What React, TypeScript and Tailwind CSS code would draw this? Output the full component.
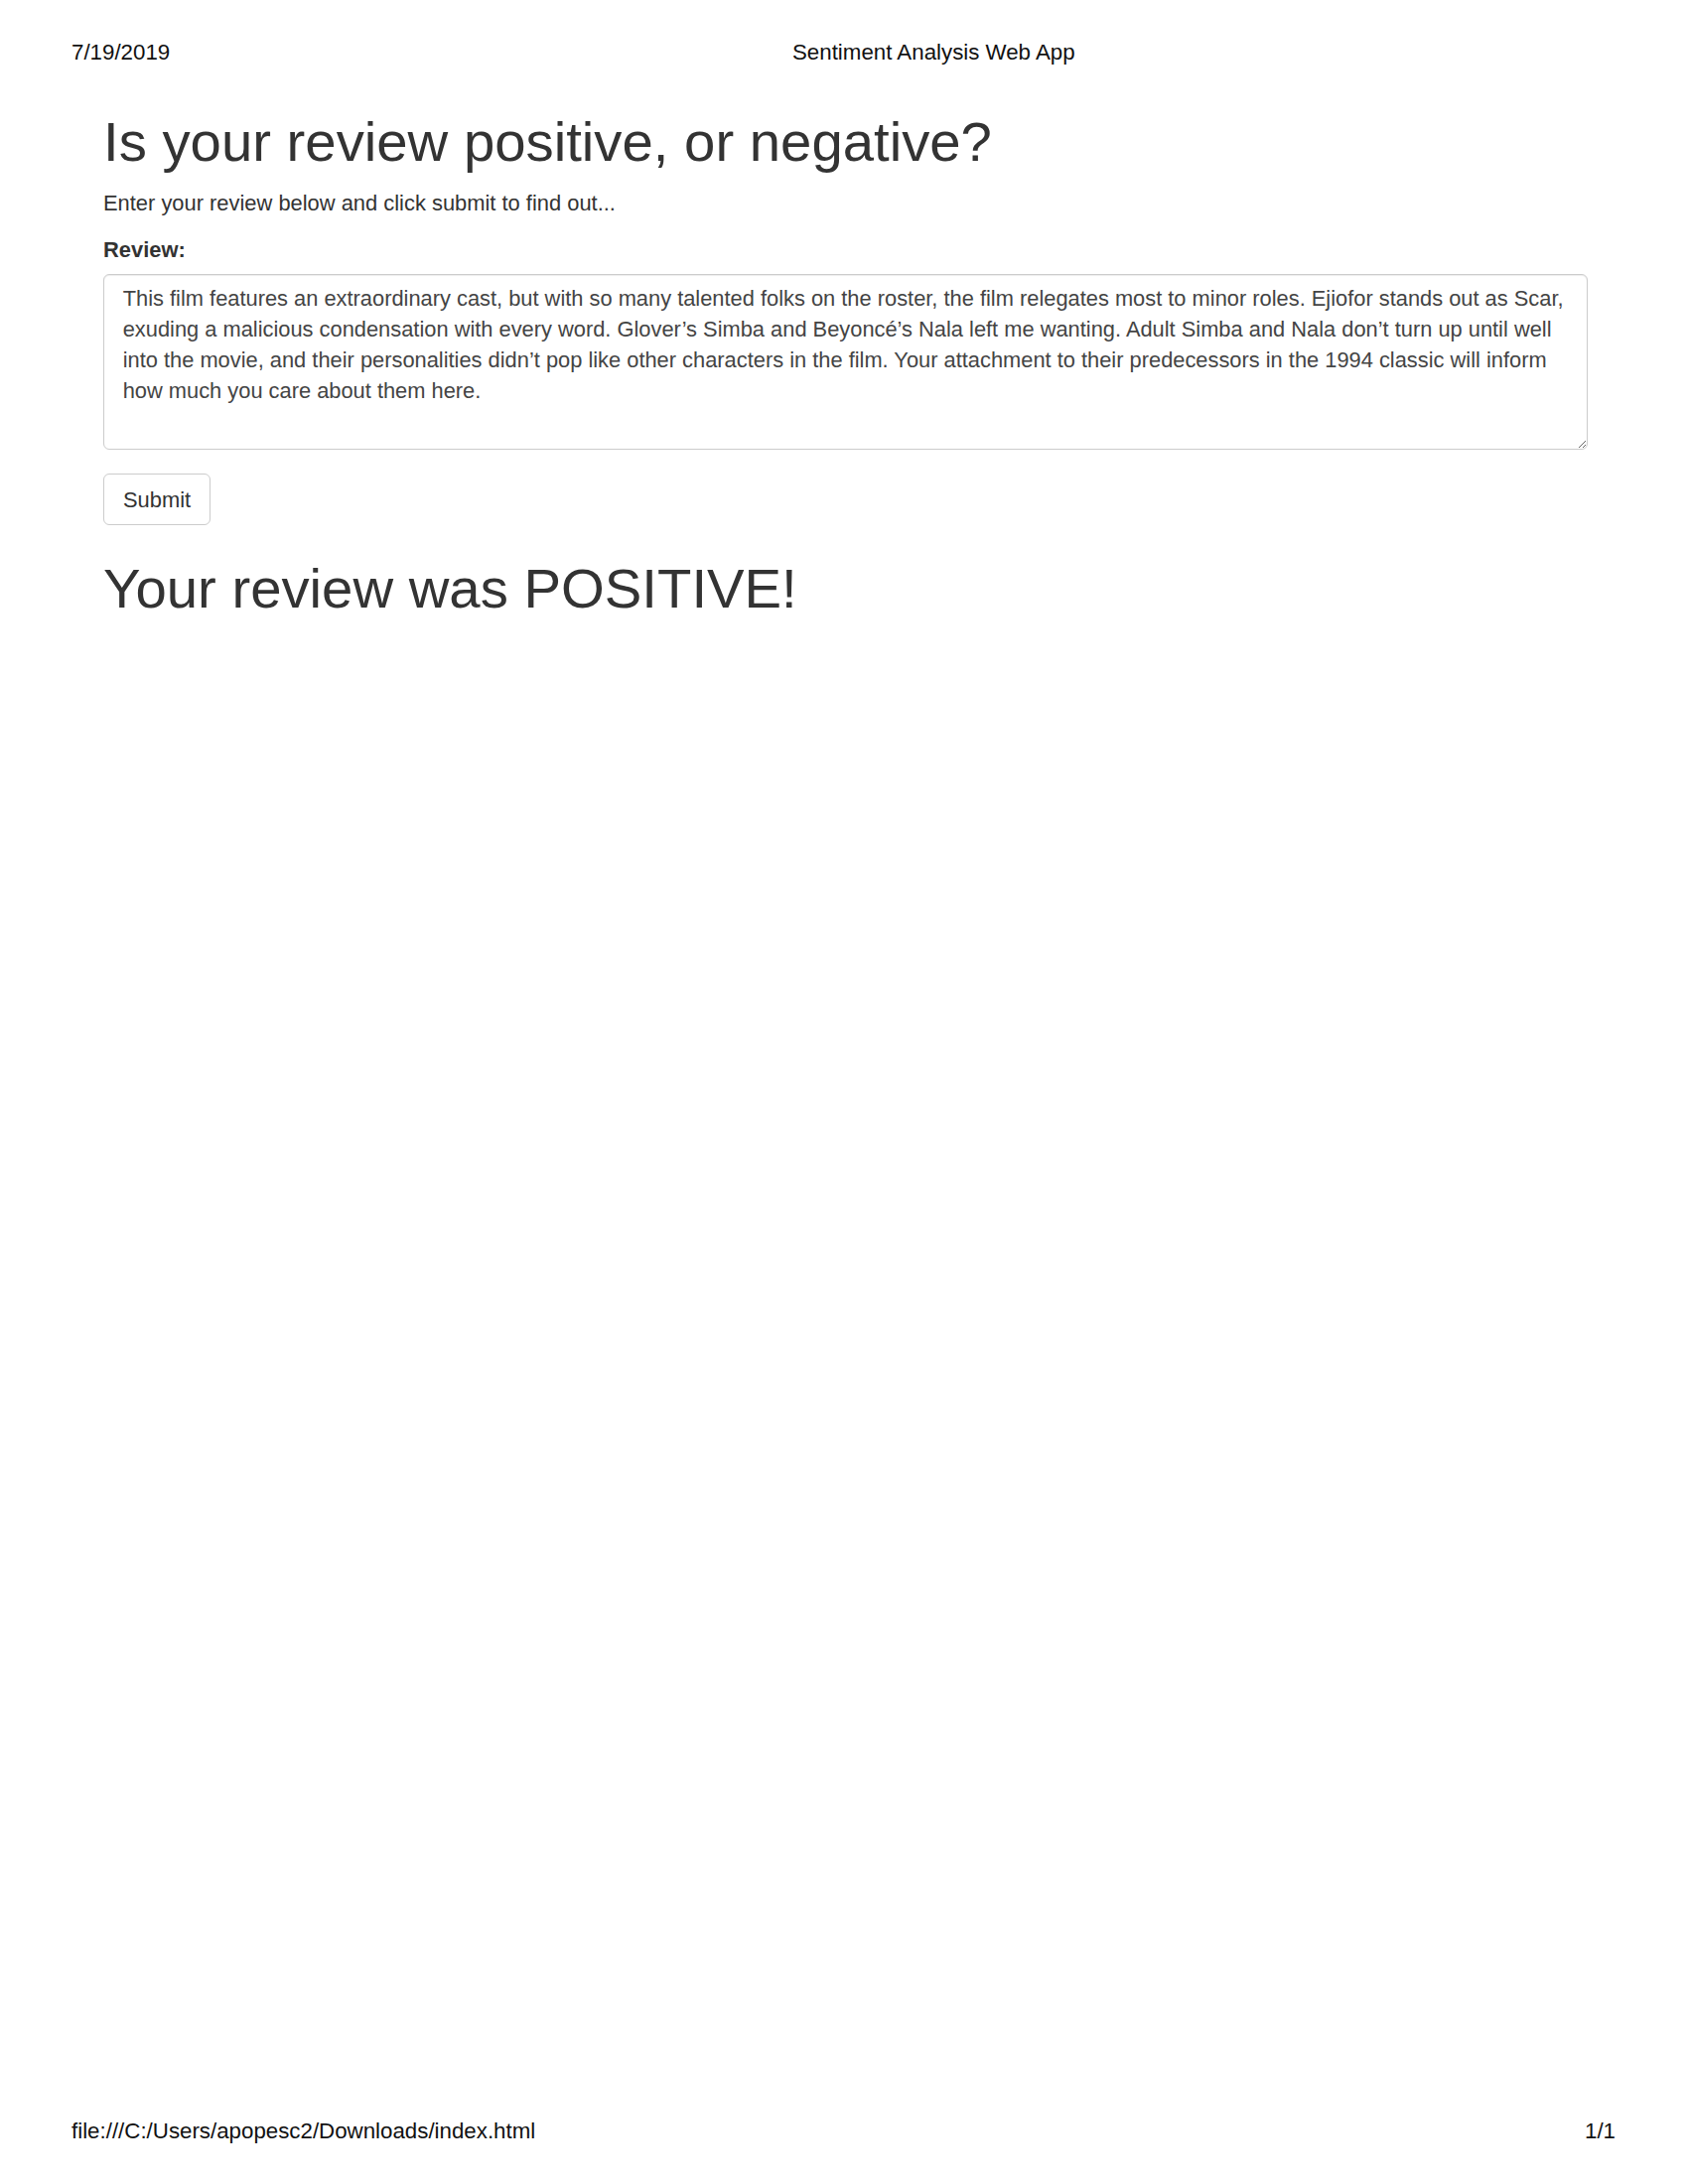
const review =
  "This film features an extraordinary cast, but with so many talented folks on the roster, the film relegates most to minor roles. Ejiofor stands out as Scar, exuding a malicious condensation with every word. Glover’s Simba and Beyoncé’s Nala left me wanting. Adult Simba and Nala don’t turn up until well into the movie, and their personalities didn’t pop like other characters in the film. Your attachment to their predecessors in the 1994 classic will inform how much you care about them here.";

export default function App() {
  return (
    <div className="flex h-[2200px] flex-col bg-white font-['Liberation_Sans',Arial,sans-serif] text-[#333]">
      {/* print header */}
      <header className="flex pl-[72px] pt-[40px] text-[22.3px] leading-[26px] text-[#111]">
        <span className="w-[726px]">7/19/2019</span>
        <span>Sentiment Analysis Web App</span>
      </header>

      <main className="flex-1 pl-[104px]">
        <h1 className="mt-[46px] text-[56.3px] font-normal leading-[62px]">Is your review positive, or negative?</h1>
        <p className="mt-[15px] text-[21.9px] leading-[31px]">Enter your review below and click submit to find out...</p>
        <form className="mt-[16px]" onSubmit={(e) => e.preventDefault()}>
          <label htmlFor="review" className="block text-[21.9px] font-bold leading-[31px]">
            Review:
          </label>
          <textarea
            id="review"
            readOnly
            defaultValue={review}
            className="mt-[9px] block h-[177px] w-[1495px] rounded-[6px] border border-[#ccc] bg-white pb-[9px] pl-[18.7px] pr-[16.5px] pt-[8px] text-[21.85px] leading-[31.1px] text-[#444] shadow-[inset_0_1px_1px_rgba(0,0,0,0.075)] outline-none"
          />
          <button
            type="submit"
            className="mt-[24px] block h-[52px] rounded-[6px] border border-[#ccc] bg-white px-[19px] text-[21.9px] leading-[31px] text-[#333]"
          >
            Submit
          </button>
        </form>
        <h1 className="mt-[33px] text-[56.3px] font-normal leading-[62px]">Your review was POSITIVE!</h1>
      </main>

      {/* print footer */}
      <footer className="flex justify-between pb-[40px] pl-[72px] pr-[73px] text-[22.3px] leading-[26px] text-[#111]">
        <span>file:///C:/Users/apopesc2/Downloads/index.html</span>
        <span>1/1</span>
      </footer>
    </div>
  );
}
